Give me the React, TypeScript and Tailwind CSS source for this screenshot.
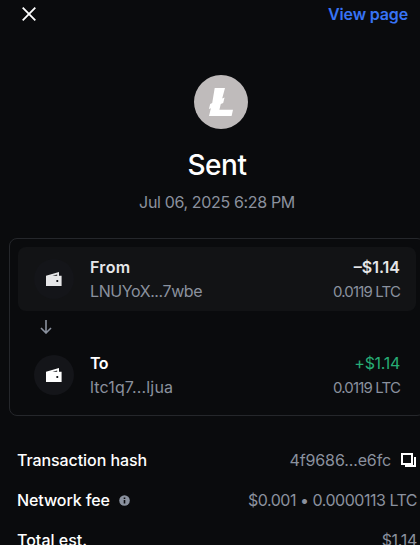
import type { ReactNode } from 'react';

interface PartyProps {
  label: ReactNode;
  address: ReactNode;
  amount: ReactNode;
  crypto: string;
}

function WalletIcon() {
  return (
    <svg width="16" height="16" viewBox="0 0 16 16" fill="currentColor">
      <path
        fillRule="evenodd"
        d="M0 4.8 13 1v3.8h2.6V15H0V4.8Zm6.4 0h4.8V3.5L6.4 4.8Zm4 4.1v2h1.8v-2h-1.8Z"
      />
    </svg>
  );
}

function LitecoinLogo() {
  return (
    <svg className="ml-2" width="54" height="54" viewBox="0 0 54 54">
      <circle cx="27" cy="27" r="27" fill="#bfbbbb" />
      <path
        d="M20.7 13H31l-2.8 10.6 2.4-1-1.4 5.5-2.4 1-1.4 5.6H39L37.6 41H15l1.9-7.7-2 .8 1.3-5.2 2-.8L20.7 13Z"
        fill="#fff"
      />
    </svg>
  );
}

function PartyDetails({ label, address, amount, crypto }: PartyProps) {
  return (
    <>
      <div className="flex size-10 items-center justify-center rounded-full bg-[#141519]">
        <WalletIcon />
      </div>
      <div className="ml-4 flex-1">
        <p className="font-semibold">{label}</p>
        <p className="text-[#8a919e]">{address}</p>
      </div>
      <div className="text-right">
        <p>{amount}</p>
        <p className="-mb-0.5 text-[15px] leading-[26px] tracking-[-0.85px] text-[#8a919e]">{crypto}</p>
      </div>
    </>
  );
}

export default function App() {
  return (
    <div className="h-[545px] w-[420px] overflow-hidden bg-[#0a0b0d] font-['Inter',sans-serif] text-base leading-6 text-white">
      <header className="flex h-7 items-center justify-between pr-3 pl-[22px]">
        <button aria-label="Close">
          <svg width="14" height="14" viewBox="0 0 14 14" fill="none" stroke="currentColor" strokeWidth="1.8">
            <path d="m.7.7 12.6 12.6M13.3.7.7 13.3" />
          </svg>
        </button>
        <a className="font-semibold tracking-[-0.15px] text-[#3773f5]">View page</a>
      </header>

      <section className="flex flex-col items-center pt-[47px] pl-[14px]">
        <LitecoinLogo />
        <h1 className="mt-[18px] text-[28px] leading-9 font-medium tracking-[-0.5px]">Sent</h1>
        <p className="mt-[7px] tracking-[-0.35px] text-[#8a919e]">Jul 06, 2025 6:28 PM</p>
      </section>

      <section className="mt-6 ml-[9px] h-[178px] w-[416px] rounded-lg border border-[#25272b] p-2">
        <div className="flex h-16 w-[398px] items-center rounded-lg bg-[#121315] px-4 text-[#e6e6e8]">
          <PartyDetails
            label={<span className="tracking-[0.3px]">From</span>}
            address={<span className="tracking-[-0.42px]">LNUYoX...7wbe</span>}
            amount={<span className="font-semibold">–$1.14</span>}
            crypto="0.0119 LTC"
          />
        </div>
        <div className="flex h-8 items-center pl-[22px] text-[#8a919e]">
          <svg width="12" height="14" viewBox="0 0 12 14" fill="none" stroke="currentColor" strokeWidth="1.6">
            <path d="M6 0v13M1 8l5 5 5-5" />
          </svg>
        </div>
        <div className="flex h-16 w-[398px] items-center px-4">
          <PartyDetails
            label={<span className="tracking-[-0.5px]">To</span>}
            address={<span className="tracking-[0.15px]">ltc1q7...ljua</span>}
            amount={<span className="tracking-[-0.3px] text-[#27ad75]">+$1.14</span>}
            crypto="0.0119 LTC"
          />
        </div>
      </section>

      <section className="mt-8 flex flex-col gap-4 pr-[3px] pl-[17px]">
        <div className="flex items-center justify-between">
          <span className="font-medium tracking-[-0.08px]">Transaction hash</span>
          <span className="flex items-center gap-2.5">
            <span className="tracking-[-0.12px] text-[#8a919e]">4f9686...e6fc</span>
            <svg width="16" height="16" viewBox="0 0 16 16" fill="none" stroke="currentColor" strokeWidth="2">
              <path d="M1 2h10v10H1zM14 5v9H4" />
            </svg>
          </span>
        </div>
        <div className="flex items-center justify-between">
          <span className="flex items-center gap-[9px]">
            <span className="font-medium tracking-[-0.1px]">Network fee</span>
            <svg width="11" height="11" viewBox="0 0 11 11">
              <circle cx="5.5" cy="5.5" r="5.3" fill="#8a919e" />
              <path d="M4.7 2.4h1.6V4H4.7zM4.7 5h1.6v3.6H4.7z" fill="#0a0b0d" />
            </svg>
          </span>
          <span className="tracking-[-0.48px] text-[#8a919e]">$0.001 • 0.0000113 LTC</span>
        </div>
        <div className="flex items-center justify-between">
          <span className="font-medium">Total est.</span>
          <span className="tracking-[-0.3px] text-[#8a919e]">$1.14</span>
        </div>
      </section>
    </div>
  );
}
